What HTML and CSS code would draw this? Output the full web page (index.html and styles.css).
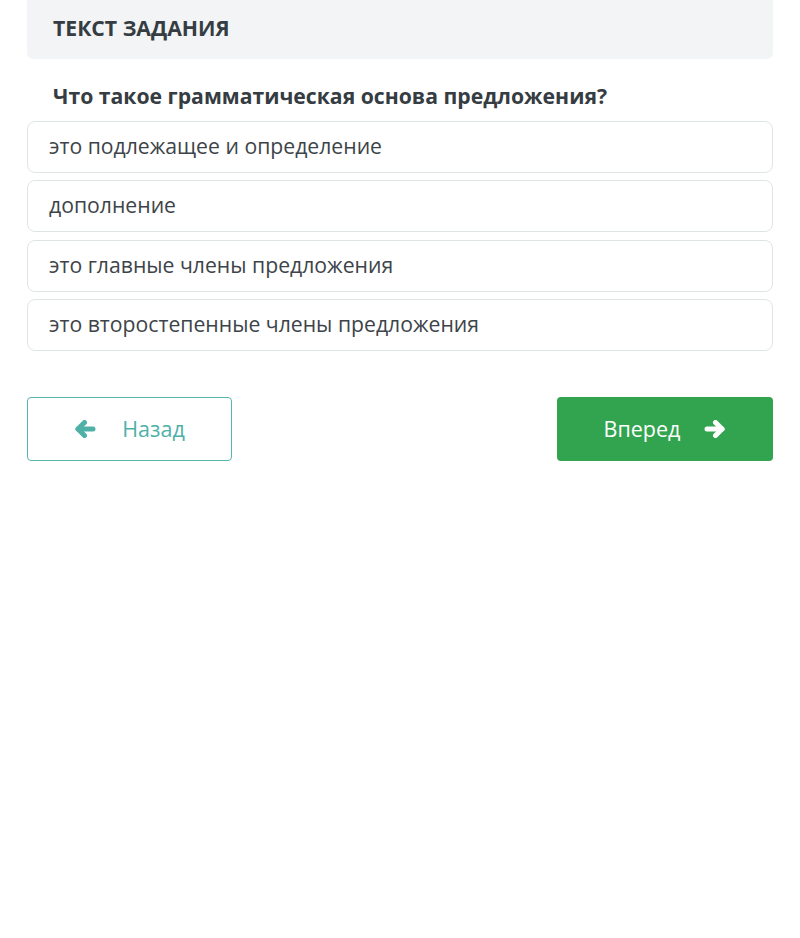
FILE: index.html
```html
<!DOCTYPE html>
<html lang="ru">
<head>
<meta charset="utf-8">
<link rel="stylesheet" href="styles.css">
</head>
<body>
<div class="page">
  <div class="task-head">ТЕКСТ ЗАДАНИЯ</div>
  <div class="question">Что такое грамматическая основа предложения?</div>
  <div class="options">
    <div class="option">это подлежащее и определение</div>
    <div class="option">дополнение</div>
    <div class="option">это главные члены предложения</div>
    <div class="option">это второстепенные члены предложения</div>
  </div>
  <div class="nav">
    <button class="btn btn-back">
      <svg class="ico" viewBox="0 0 22 18" width="22" height="18"><g fill="none" stroke="currentColor" stroke-width="5" stroke-linecap="round" stroke-linejoin="round"><path d="M4 9H19"/><path d="M10.5 2.5L4 9l6.5 6.5"/></g></svg>
      <span>Назад</span>
    </button>
    <button class="btn btn-next">
      <span>Вперед</span>
      <svg class="ico" viewBox="0 0 22 18" width="22" height="18"><g fill="none" stroke="currentColor" stroke-width="5" stroke-linecap="round" stroke-linejoin="round"><path d="M3 9H18"/><path d="M11.5 2.5L18 9l-6.5 6.5"/></g></svg>
    </button>
  </div>
</div>
</body>
</html>
```

FILE: styles.css
```css
* { box-sizing: border-box; }
html, body { margin: 0; padding: 0; background: #fff; }
body { font-family: "Open Sans", "Noto Sans", sans-serif; color: #3a4147; }
.page { padding: 0 27px; }
.task-head {
  background: #f2f4f5;
  height: 59px;
  border-radius: 0 0 6px 6px;
  padding: 0 26px 4px;
  display: flex;
  align-items: center;
  font-weight: 700;
  font-size: 21.2px;
  color: #353c42;
}
.question {
  padding: 23px 26px 0;
  height: 62px;
  font-weight: 700;
  font-size: 21.2px;
  line-height: 28px;
  color: #353c42;
}
.options { display: flex; flex-direction: column; gap: 7.33px; }
.option {
  height: 52px;
  border: 1px solid #dfe5e5;
  border-radius: 8px;
  padding: 0 21px 3px;
  display: flex;
  align-items: center;
  font-size: 21.2px;
  color: #3d4449;
}
.nav {
  margin-top: 46px;
  display: flex;
  justify-content: space-between;
}
.btn {
  height: 64px;
  border-radius: 4px;
  font-family: inherit;
  font-size: 21.5px;
  display: flex;
  align-items: center;
  justify-content: center;
  gap: 24px;
  cursor: pointer;
}
.btn-back {
  width: 205px;
  background: #fff;
  border: 1px solid #58b5ae;
  color: #4fb0a8;
  padding-right: 6px;
  gap: 26px;
}
.btn-next {
  width: 216px;
  background: #32a44f;
  border: none;
  color: #fff;
  gap: 24px;
  padding-left: 6px;
}
.ico { display: block; }
```
